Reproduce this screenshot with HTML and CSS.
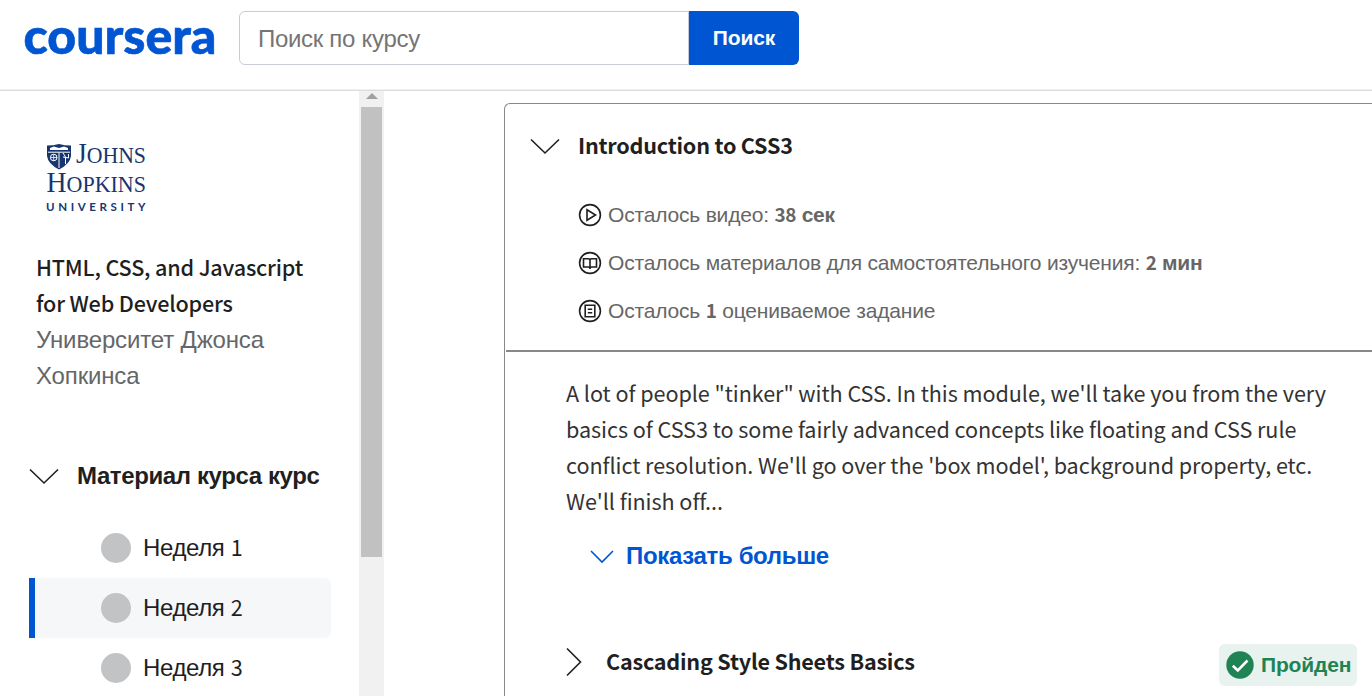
FILE: index.html
```html
<!DOCTYPE html>
<html lang="ru">
<head>
<meta charset="utf-8">
<title>Coursera</title>
<link rel="stylesheet" href="styles.css">
</head>
<body>
<header class="header">
  <svg class="logo" width="193" height="40" viewBox="0 0 193 40"><text class="logo-text" x="-0.5" y="32.6" textLength="193" lengthAdjust="spacingAndGlyphs">coursera</text></svg>
  <div class="search">
    <div class="search-field">Поиск по курсу</div>
    <div class="search-button">Поиск</div>
  </div>
</header>
<div class="layout">
  <aside class="sidebar">
    <svg class="jhu" width="102" height="72" viewBox="0 0 102 72">
      <path d="M1 2.5Q7 2.5 13 1Q19 2.5 25 2.5V13Q24 21 13 26.5Q2 21 1 13Z" fill="#17366f"/>
      <path d="M4 5L8 3.5L13 5L18 3.5L22 5V7H4Z" fill="#fff"/>
      <path d="M2 9.2H24M13 9.5V25M17 10L19.5 14V21M22.5 11V15L17 14" stroke="#fff" stroke-width="1" fill="none"/>
      <circle cx="7.7" cy="14.5" r="3.3" fill="none" stroke="#fff"/>
      <path d="M4.5 14.5H11M7.7 11.5V18" stroke="#fff" stroke-width=".8"/>
      <g class="jhu-serif">
        <text x="30" y="20.4" textLength="70" lengthAdjust="spacingAndGlyphs"><tspan class="cap">J</tspan>OHNS</text>
        <text x="0.5" y="49" textLength="99.5" lengthAdjust="spacingAndGlyphs"><tspan class="cap">H</tspan>OPKINS</text>
      </g>
      <text class="jhu-sans" x="0" y="68" textLength="99.5">UNIVERSITY</text>
    </svg>
    <div class="course">
      <div class="course-title">HTML, CSS, and Javascript<br>for Web Developers</div>
      <div class="course-school">Университет Джонса<br>Хопкинса</div>
    </div>
    <div class="section">
      <svg class="chev" width="30" height="18" viewBox="0 0 30 18"><path d="M1 2.5L15 16L29 2.5"/></svg>
      <span>Материал курса курс</span>
    </div>
    <div class="weeks">
      <div class="week"><i class="dot"></i><span>Неделя <span class="src">1</span></span></div>
      <div class="week active"><i class="dot"></i><span>Неделя <span class="src">2</span></span></div>
      <div class="week"><i class="dot"></i><span>Неделя <span class="src">3</span></span></div>
    </div>
  </aside>
  <div class="scrollbar"><i class="arrow"></i><div class="thumb"></div></div>
  <main class="main">
    <section class="panel">
      <div class="module">
        <div class="module-head">
          <svg class="chev" width="30" height="18" viewBox="0 0 30 18"><path d="M1 2.5L15 16L29 2.5"/></svg>
          <span class="module-title">Introduction to CSS3</span>
        </div>
        <div class="stat">
          <svg width="24" height="24" viewBox="0 0 24 24"><circle cx="12" cy="12" r="10.4"/><path d="M9 6.8V17.2L17.5 12Z"/></svg>
          <span>Осталось видео: <b><span class="src">38</span> сек</b></span>
        </div>
        <div class="stat">
          <svg width="24" height="24" viewBox="0 0 24 24"><circle cx="12" cy="12" r="10.4"/><path d="M12 9Q12 7.8 10.5 7.8H5.5V16H10.5Q12 16 12 17.5Q12 16 13.5 16H18.5V7.8H13.5Q12 7.8 12 9V18"/></svg>
          <span>Осталось материалов для самостоятельного изучения: <b><span class="src">2</span> мин</b></span>
        </div>
        <div class="stat">
          <svg width="24" height="24" viewBox="0 0 24 24"><circle cx="12" cy="12" r="10.4"/><path d="M7.2 6.3H16.8V17.7H7.2ZM9.8 10.2H14.2M9.8 13.8H14.2"/></svg>
          <span>Осталось <b><span class="src">1</span></b> оцениваемое задание</span>
        </div>
      </div>
      <div class="details">
        <p class="text">A lot of people "tinker" with CSS. In this module, we'll take you from the very<br>basics of CSS3 to some fairly advanced concepts like floating and CSS rule<br>conflict resolution. We'll go over the 'box model', background property, etc.<br>We'll finish off...</p>
        <div class="more">
          <svg width="24" height="14" viewBox="0 0 24 14"><path d="M1 2L12 13L23 2"/></svg>
          <span>Показать больше</span>
        </div>
        <div class="lesson">
          <svg class="chev" width="18" height="30" viewBox="0 0 18 30"><path d="M2 1.5L15.5 15L2 28.5"/></svg>
          <span class="lesson-title">Cascading Style Sheets Basics</span>
          <div class="badge">
            <svg width="28" height="28" viewBox="0 0 28 28"><circle cx="14" cy="14" r="13.7" fill="#1f8354"/><path d="M6.8 14.8L11.8 19.5L21.5 9.5" fill="none" stroke="#fff" stroke-width="2.6"/></svg>
            <span>Пройден</span>
          </div>
        </div>
      </div>
    </section>
  </main>
</div>
</body>
</html>
```
FILE: styles.css
```css
* { box-sizing: border-box; }
body { margin: 0; width: 1372px; height: 696px; overflow: hidden; background: #fff; color: #1f1f1f; font: 24px/36px "Liberation Sans", Arial, sans-serif; }
svg { display: block; flex: none; overflow: visible; }
span { white-space: nowrap; }
.src { font-family: "Noto Sans CJK SC", sans-serif; font-size: .9em; line-height: 1; }
.header { height: 91px; display: flex; padding: 11px 0 0 24px; border-bottom: 1px solid #ddd; box-shadow: inset 0 -1px #f0f0f0; }
.logo { margin-top: 10px; }
.logo-text { font: 900 50px Lato, sans-serif; fill: #0056d2; stroke: #0056d2; stroke-width: .6; }
.search { display: flex; height: 54px; width: 560px; margin-left: 22px; }
.search-field { width: 450px; border: 1px solid #c7cbd8; border-radius: 6px 0 0 6px; padding: 9px 18px; color: #757575; letter-spacing: -.3px; }
.search-button { width: 110px; background: #0056d2; border-radius: 0 6px 6px 0; color: #fff; font-weight: bold; font-size: 21px; line-height: 54px; text-align: center; letter-spacing: -.1px; }
.layout { display: flex; height: 605px; }
.sidebar { width: 359px; height: 605px; overflow: hidden; padding: 52px 28px 0 29px; }
.jhu { margin-left: 17px; }
.jhu-serif { font: 23px "Liberation Serif", serif; fill: #17366f; }
.cap { font-size: 29px; }
.jhu-sans { font: bold 11.5px Lato, sans-serif; fill: #17366f; }
.course { margin: 34px 0 0 7px; }
.course-title { height: 73px; font-family: "Noto Sans CJK SC", sans-serif; font-size: 21.6px; font-weight: 500; letter-spacing: -.18px; }
.course-school { color: #666; letter-spacing: -.15px; }
.section { display: flex; align-items: center; gap: 18px; height: 36px; margin-top: 64px; font-weight: bold; letter-spacing: -.39px; }
.chev path { fill: none; stroke: #1f1f1f; stroke-width: 1.6; }
.weeks { margin-top: 24px; }
.week { display: flex; align-items: center; gap: 12px; height: 60px; padding-left: 72px; letter-spacing: -.38px; }
.week.active { background: #f5f7f9; border-left: 6px solid #0056d2; padding-left: 66px; border-radius: 0 6px 6px 0; }
.dot { width: 30px; height: 30px; border-radius: 50%; background: #c1c3c5; }
.scrollbar { width: 25px; background: #f1f1f1; padding: 2px 2px 0; flex: none; }
.arrow { display: block; margin: 0 auto 8px 5px; width: 0; border: 6px solid transparent; border-top: 0; border-bottom: 6px solid #a0a0a0; }
.thumb { height: 450px; background: #c1c1c1; }
.main { flex: 1; padding: 12px 0 0 120px; min-width: 0; }
.panel { height: 620px; border: 1px solid #888; border-right: 0; border-radius: 6px 0 0 0; }
.module { height: 248px; border-bottom: 2px solid #888; padding: 23px 0 0 24px; margin-left: 1px; }
.module-head { display: flex; align-items: center; gap: 18px; height: 36px; margin-bottom: 28px; }
.module-title, .lesson-title { font-family: "Noto Sans CJK SC", sans-serif; font-size: 21.6px; font-weight: bold; letter-spacing: -.23px; }
.module-head .chev { margin-top: 2px; }
.stat { display: flex; align-items: center; gap: 6px; height: 48px; padding-left: 48px; font-size: 21px; color: #666; letter-spacing: -.19px; }
.stat b { letter-spacing: -.3px; }
.stat svg { fill: none; stroke: #1f1f1f; stroke-width: 1.6; }
.details { padding: 23px 0 0 60px; }
.text { margin: 0; padding-left: 1px; font-family: "Noto Sans CJK SC", sans-serif; font-size: 21.6px; color: #333; letter-spacing: -.06px; }
.more { display: flex; align-items: center; gap: 12px; height: 36px; margin-top: 19px; padding-left: 25px; color: #0056d2; font-weight: bold; letter-spacing: -.34px; }
.more path { fill: none; stroke: #0056d2; stroke-width: 1.6; }
.lesson { display: flex; align-items: center; height: 36px; margin-top: 70px; padding-right: 15px; }
.lesson-title { margin: -2px 0 0 23px; }
.badge { display: flex; align-items: center; gap: 7px; width: 138px; height: 42px; margin: 6px 0 0 auto; padding-left: 7px; border-radius: 6px; background: #e8f2ee; color: #1f8354; font-size: 21px; font-weight: bold; letter-spacing: -.15px; }
```
